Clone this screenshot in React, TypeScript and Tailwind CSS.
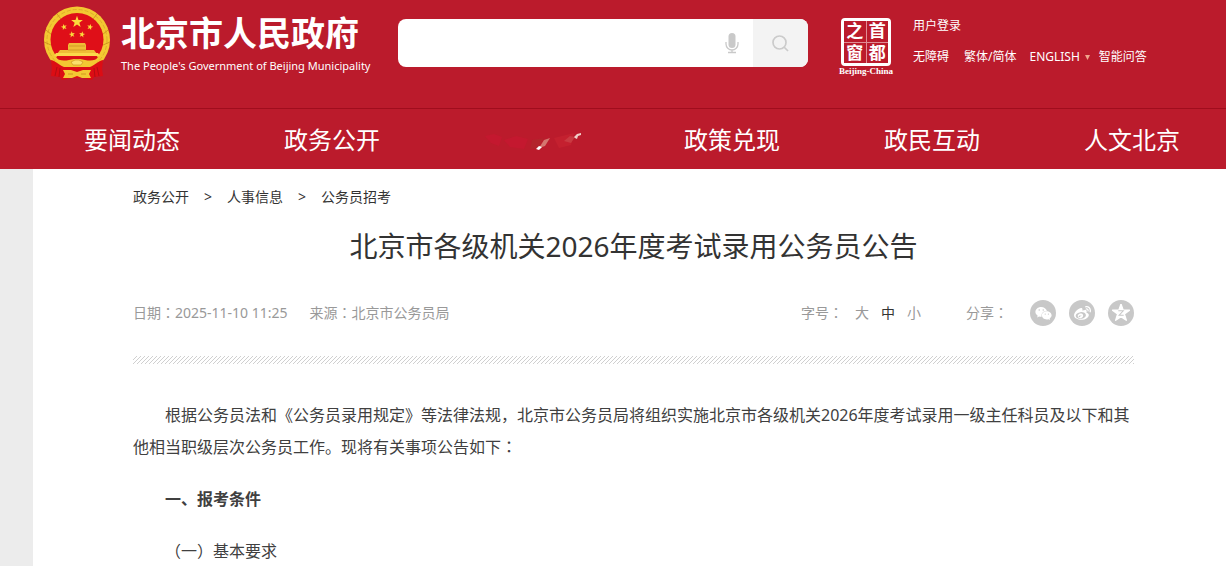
import { FaWeibo, FaWeixin } from "react-icons/fa";

const navItems = ["要闻动态", "政务公开", "", "政策兑现", "政民互动", "人文北京"];
const crumbs = ["政务公开", "人事信息", "公务员招考"];
const fontSizes = ["大", "中", "小"];

const STAR = "M0-10 2.4-3.2 9.5-3.1 3.8 1.2 5.9 8.1 0 4-5.9 8.1-3.8 1.2-9.5-3.1-2.4-3.2Z";

function Emblem() {
  return (
    <svg width="68" height="74" viewBox="0 0 68 74" className="shrink-0" aria-hidden="true">
      <ellipse cx="34" cy="34" rx="33" ry="33.500" fill="#f3c832" />
      <ellipse cx="34" cy="34" rx="30" ry="30.500" fill="none" stroke="#e0ac2a" strokeWidth="1" strokeDasharray="4 2" />
      <path d="m3 24 6 5M1 36l7 3M65 24l-6 5M67 36l-7 3M14 8l4 5M54 8l-4 5" stroke="#c98c1c" strokeWidth=".8" />
      <circle cx="34" cy="33.500" r="26.500" fill="#df0f18" />
      <g fill="#fbdc3c">
        <path d={STAR} transform="translate(34 16) scale(.62)" />
        <path d={STAR} transform="translate(21 21) rotate(-15) scale(.32)" />
        <path d={STAR} transform="translate(47 21) rotate(15) scale(.32)" />
        <path d={STAR} transform="translate(29 28.500) rotate(-10) scale(.32)" />
        <path d={STAR} transform="translate(39 28.500) rotate(10) scale(.32)" />
      </g>
      <path d="m25 39 1-2h16l1 2v5h8l3 4H14l3-4h8Z" fill="#efbd36" />
      <path d="M26 40h16M25 44h18" stroke="#c98c1c" strokeWidth=".7" />
      <path d="M13 47h42l2 3H11Z" fill="#fbd84a" />
      <path d="M13 51h42l-6 7H19Z" fill="#d80f16" />
      <path d="M11 51c5 4 10 4 15 3l5-1h6l5 1c5 1 10 1 15-3l-6 9-12 2H29l-12-2Z" fill="#f3c832" />
      <path d="m28 56 4-2h4l4 2-2 3h-8Z" fill="#fbe06a" stroke="#c98c1c" strokeWidth=".6" />
      <path d="M8 54c5 1 8 5 13 7h26c5-2 8-6 13-7l-1 9 1 7-9 1-2 3-9-2H28l-9 2-2-3-9-1 1-7Z" fill="#dc0d14" />
      <path d="M20 64h8l6 2 6-2h8l-2 4 2 4h-9l-5-2-5 2h-9l2-4Z" fill="#f3c832" />
      <path d="m14 61-2 9M17 62l-1 9M54 61l2 9M51 62l1 9" stroke="#a80c13" strokeWidth=".8" />
      <path d="M25 68h5m8 0h5" stroke="#c98c1c" strokeWidth=".8" />
    </svg>
  );
}

function MicIcon() {
  return (
    <svg width="14" height="22" viewBox="0 0 14 22" fill="none" stroke="#c9c9c9" strokeWidth="1.300" aria-hidden="true">
      <rect x="3.500" y="1" width="7" height="15" rx="3.500" fill="#c9c9c9" stroke="none" />
      <path d="M1 10v2a6 6 0 0 0 12 0v-2M7 18v2.500M3 20.500h8" />
    </svg>
  );
}

function SearchIcon() {
  return (
    <svg width="17" height="17" viewBox="0 0 17 17" fill="none" stroke="#cbcbcb" strokeWidth="1.700" aria-hidden="true">
      <circle cx="7.500" cy="7.500" r="6.500" />
      <path d="m12 12 4 4" />
    </svg>
  );
}

function QzoneIcon() {
  return (
    <svg width="18" height="18" viewBox="-10 -10 20 20" aria-hidden="true">
      <path d={STAR} fill="#fff" stroke="#fff" strokeWidth="1.500" strokeLinejoin="round" />
      <path d="M-3-2.500h5.500L-2 2.500h5" fill="none" stroke="#c8c8c8" strokeWidth="1.200" />
    </svg>
  );
}

// Faint worn traces left in the third menu slot
function WornLabel() {
  return (
    <svg width="100" height="24" viewBox="0 0 100 24" aria-hidden="true">
      <path d="M3 8l9-2 8 3-3 9-8-3ZM22 12l12-4 12 3-4 10-14-2Z" fill="#c4182f" />
      <path d="M50 12l12-2-6 10-8 1Z" fill="#b3242c" />
      <path d="M72 10l20-5-3 12-12 3Z" fill="#c4202f" />
      <path d="m82 13 6-5 5 1-4 6Z" fill="#c93a42" />
      <path d="m57 20 5-8 6-2-5 8Z" fill="#d4766f" />
      <path d="m54 21 3-3 3 1-3 3Z" fill="#fff" />
      <path d="m92 9 3-3 4-1v2l-3 1-1 3-2-1Z" fill="#f0cfc8" />
    </svg>
  );
}

// Full-width punctuation that sits in the middle of its cell
function Mark({ children }: { children: string }) {
  return <span className="font-['Noto_Sans_CJK_TC',sans-serif] leading-none">{children}</span>;
}

function Header() {
  return (
    <header className="shrink-0 overflow-hidden bg-[#bb1b2c] text-white">
      <div className="flex h-[108px] items-start">
        <a href="#" className="ml-[43px] flex w-[323px] shrink-0 gap-2.5 pt-1.5">
          <Emblem />
          <span className="flex flex-col whitespace-nowrap pt-2">
            <span className="text-[34px] font-bold leading-[38px]">北京市人民政府</span>
            <span className="mt-1 text-[11px] leading-5">The People's Government of Beijing Municipality</span>
          </span>
        </a>
        <form className="ml-8 mt-[19px] flex h-12 w-[410px] shrink-0 overflow-hidden rounded-lg bg-white">
          <input type="text" aria-label="搜索" className="min-w-0 flex-1 px-4 text-base text-[#333] outline-none" />
          <button type="button" aria-label="语音" className="flex w-[42px] items-center justify-center">
            <MicIcon />
          </button>
          <button type="button" aria-label="搜索" className="flex w-[55px] items-center justify-center bg-[#f3f3f3]">
            <SearchIcon />
          </button>
        </form>
        <a href="#" className="ml-[30px] mt-[18px] flex w-14 shrink-0 flex-col items-center">
          <span className="grid h-12 w-[50px] grid-cols-2 grid-rows-2 gap-px rounded-sm border-[3px] border-white bg-[#e08d95] text-center text-[17px] font-bold leading-5">
            <span className="bg-[#bb1b2c]">之</span>
            <span className="bg-[#bb1b2c]">首</span>
            <span className="bg-[#bb1b2c]">窗</span>
            <span className="bg-[#bb1b2c]">都</span>
          </span>
          <span className="font-['Liberation_Serif',serif] text-[9px] font-bold leading-[10px]">Beijing-China</span>
        </a>
        <div className="ml-[19px] flex shrink-0 flex-col gap-[11px] pt-4 text-[12px] leading-5">
          <a href="#">用户登录</a>
          <div className="flex">
            <a href="#" className="mr-[15px]">无障碍</a>
            <a href="#" className="mr-[13px]">繁体/简体</a>
            <a href="#" className="mr-[9px] flex items-center gap-[5px]">
              ENGLISH
              <svg width="5" height="5" viewBox="0 0 5 5" aria-hidden="true">
                <path d="M0 0h5L2.500 5Z" fill="#f0a58c" />
              </svg>
            </a>
            <a href="#">智能问答</a>
          </div>
        </div>
      </div>
      <nav className="-mr-1.5 grid h-[61px] grid-cols-6 border-t border-[#a00d1d] pl-8 pt-0.5 text-2xl">
        {navItems.map((item, index) => (
          <a href="#" key={index} className="flex items-center justify-center">
            {item || <WornLabel />}
          </a>
        ))}
      </nav>
    </header>
  );
}

function Toolbar() {
  return (
    <div className="flex h-[26px] items-center text-sm text-[#999]">
      <span>日期<Mark>：</Mark>2025-11-10 11:25</span>
      <span className="ml-[22px]">来源<Mark>：</Mark>北京市公务员局</span>
      <div className="ml-auto flex items-center">
        <span>字号<Mark>：</Mark></span>
        <div className="ml-3 flex gap-3">
          {fontSizes.map((size) => (
            <button type="button" key={size} className={size === "中" ? "text-[#333]" : ""}>
              {size}
            </button>
          ))}
        </div>
        <span className="ml-[45px]">分享<Mark>：</Mark></span>
        <div className="ml-[22px] flex gap-[13px] text-white">
          <a href="#" aria-label="微信" className="flex size-[26px] items-center justify-center rounded-full bg-[#c8c8c8]">
            <FaWeixin size={17} />
          </a>
          <a href="#" aria-label="微博" className="flex size-[26px] items-center justify-center rounded-full bg-[#c8c8c8]">
            <FaWeibo size={17} />
          </a>
          <a href="#" aria-label="QQ空间" className="flex size-[26px] items-center justify-center rounded-full bg-[#c8c8c8]">
            <QzoneIcon />
          </a>
        </div>
      </div>
    </div>
  );
}

export default function App() {
  return (
    <div className="flex h-screen flex-col overflow-hidden bg-[#ececec] font-['Noto_Sans','Noto_Sans_CJK_SC',sans-serif]">
      <Header />
      <main className="ml-[33px] flex-1 bg-white pl-[100px] pr-[92px] pt-[18px] text-[#333]">
        <div className="flex gap-[15px] text-sm">
          {crumbs.map((crumb, index) => (
            <span key={crumb} className="flex gap-[15px]">
              {index > 0 && <span>&gt;</span>}
              <a href="#">{crumb}</a>
            </span>
          ))}
        </div>
        <h1 className="mb-[34px] mt-[19px] text-center text-[28px] leading-10">北京市各级机关2026年度考试录用公务员公告</h1>
        <Toolbar />
        <div className="mt-[30px] h-2 bg-[linear-gradient(135deg,transparent_38%,#d0d0d0_38%_62%,transparent_62%)] bg-[length:4px_4px]" />
        <article className="mt-[35px] flex flex-col gap-5 text-base leading-8 text-[#404040]">
          <p className="indent-8">
            根据公务员法和《公务员录用规定》等法律法规，北京市公务员局将组织实施北京市各级机关2026年度考试录用一级主任科员及以下和其他相当职级层次公务员工作。现将有关事项公告如下<Mark>：</Mark>
          </p>
          <h2 className="indent-8 font-bold">一、报考条件</h2>
          <p className="indent-8"><Mark>（</Mark>一<Mark>）</Mark>基本要求</p>
        </article>
      </main>
    </div>
  );
}
